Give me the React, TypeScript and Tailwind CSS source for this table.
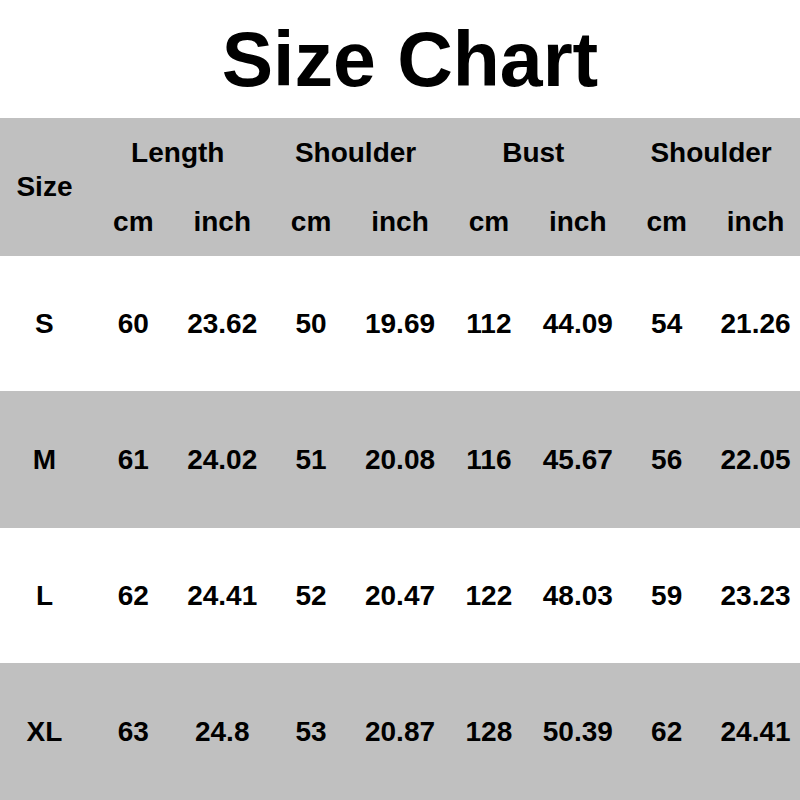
import React from "react";

const rows = [
  ["S", "60", "23.62", "50", "19.69", "112", "44.09", "54", "21.26"],
  ["M", "61", "24.02", "51", "20.08", "116", "45.67", "56", "22.05"],
  ["L", "62", "24.41", "52", "20.47", "122", "48.03", "59", "23.23"],
  ["XL", "63", "24.8", "53", "20.87", "128", "50.39", "62", "24.41"],
];

const groups = ["Length", "Shoulder", "Bust", "Shoulder"];

export default function App() {
  return (
    <div
      className="w-[800px] h-[800px] bg-white text-black font-bold overflow-hidden"
      style={{ fontFamily: '"Liberation Sans", Arial, sans-serif' }}
    >
      <div className="h-[118px] flex items-center justify-center pl-[20px]">
        <span className="text-[77px] leading-none">Size Chart</span>
      </div>
      <div className="grid grid-cols-9 grid-rows-[69px_69px] bg-[#c0c0c0] text-[28px] leading-none">
        <div className="row-span-2 flex items-center justify-center">Size</div>
        {groups.map((g, i) => (
          <div key={i} className="col-span-2 flex items-center justify-center">
            {g}
          </div>
        ))}
        {groups.map((_, i) => (
          <React.Fragment key={i}>
            <div className="flex items-center justify-center">cm</div>
            <div className="flex items-center justify-center">inch</div>
          </React.Fragment>
        ))}
      </div>
      {rows.map((r, i) => (
        <div
          key={i}
          className={
            i % 2 === 0
              ? "grid grid-cols-9 h-[135px] bg-white text-[28px] leading-none"
              : "grid grid-cols-9 h-[137px] bg-[#c0c0c0] text-[28px] leading-none"
          }
        >
          {r.map((c, j) => (
            <div key={j} className="flex items-center justify-center">
              {c}
            </div>
          ))}
        </div>
      ))}
    </div>
  );
}
